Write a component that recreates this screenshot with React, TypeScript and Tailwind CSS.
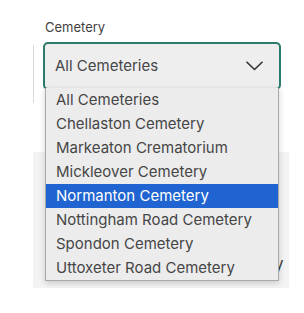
const cemeteries = [
  "All Cemeteries",
  "Chellaston Cemetery",
  "Markeaton Crematorium",
  "Mickleover Cemetery",
  "Normanton Cemetery",
  "Nottingham Road Cemetery",
  "Spondon Cemetery",
  "Uttoxeter Road Cemetery",
];

export default function App() {
  return (
    <div className="relative h-[313px] w-[304px] overflow-hidden bg-white font-['Inter',sans-serif] text-[#464646]">
      {/* faint edge of the panel behind */}
      <div className="absolute left-[33px] top-[45px] h-[58px] w-px bg-[#d9d9d9]" />

      <div className="relative pl-[43px] pr-[23px] pt-[19px]">
        <label className="block pl-[2px] text-[13px] leading-[16px] text-[#3f3f3f]">
          Cemetery
        </label>

        {/* select */}
        <div className="mt-[7px] flex h-[48px] items-center justify-between rounded-[5px] border-2 border-[#2c7a6b] bg-[#eeeeee] pl-[10px] pr-[16px]">
          <span className="text-[15px]">All Cemeteries</span>
          <svg width="17" height="10" viewBox="0 0 17 10" fill="none">
            <path d="M1 1.2l7.5 7.3L16 1.2" stroke="#333" strokeWidth="1.6" strokeLinecap="round" strokeLinejoin="round" />
          </svg>
        </div>
      </div>

      {/* panel under the open list */}
      <div className="relative ml-[33px] mt-[62px] h-[136px] w-[256px] bg-[#f3f3f3]">
        <span className="absolute left-[242px] top-[104px] text-[15px] leading-[15px] text-[#333]">y</span>
      </div>

      {/* open option list */}
      <ul className="absolute left-[45px] top-[88px] w-[234px] border-x border-b border-[#a9a9a9] bg-[#ececec] shadow-[0_2px_6px_rgba(0,0,0,0.18)]">
        {cemeteries.map((c) =>
          c === "Normanton Cemetery" ? (
            <li key={c} className="flex h-[24px] items-center bg-[#1f64d1] pl-[10px] text-[15px] text-white">
              {c}
            </li>
          ) : (
            <li key={c} className="flex h-[24px] items-center pl-[10px] text-[15px]">
              {c}
            </li>
          )
        )}
      </ul>
    </div>
  );
}
